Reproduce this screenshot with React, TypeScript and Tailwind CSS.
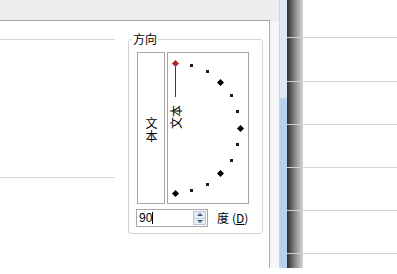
import React from "react";

const cjk = { fontFamily: '"Noto Sans CJK SC", "Noto Sans", sans-serif' };

function Dial() {
  const angles = [90, 75, 60, 45, 30, 15, 0, -15, -30, -45, -60, -75, -90];
  const cx = 7;
  const cy = 75;
  const r = 65;
  return (
    <div className="relative w-[82px] h-[152px] border border-[#a6a6a6] bg-white">
      {angles.map((a) => {
        const rad = (a * Math.PI) / 180;
        const x = cx + r * Math.cos(rad);
        const y = cy - r * Math.sin(rad);
        const big = a % 45 === 0;
        const red = a === 90;
        const s = big ? 5 : 3;
        return (
          <div
            key={a}
            className={
              big
                ? red
                  ? "absolute rotate-45 bg-[#b3232a]"
                  : "absolute rotate-45 bg-black"
                : "absolute bg-[#1a1a1a]"
            }
            style={{ left: x - s / 2, top: y - s / 2, width: s, height: s }}
          />
        );
      })}
      <div className="absolute left-[7px] top-[14px] w-[1px] h-[30px] bg-[#3a3a3a]" />
      <div
        className="absolute left-[-4px] top-[57px] w-[24px] h-[14px] -rotate-90 text-[12px] leading-[14px] text-black whitespace-nowrap"
        style={cjk}
      >
        文本
      </div>
    </div>
  );
}

export default function App() {
  return (
    <div className="w-[397px] h-[274px] bg-white overflow-hidden">
      <div className="flex h-[268px]">
        {/* main pane */}
        <div className="w-[270px] flex flex-col">
          <div className="h-[21px] bg-[#eeeeee] border-b border-[#a4a4a4] shrink-0" />
          <div className="flex-1 flex border-r border-[#b0b0b0]">
            <div className="w-[115px] flex flex-col">
              <div className="h-[18px]" />
              <div className="h-[138px] border-t border-[#d6d6d6]" />
              <div className="h-[90px] border-t border-[#d6d6d6]" />
            </div>
            <div className="ml-[13px] mt-[18px] w-[135px] h-[195px] border border-[#d4d4d4] rounded-[3px] relative">
              <div
                className="absolute left-[3px] top-[-8px] bg-white px-[1px] text-[12px] leading-[14px] text-black"
                style={cjk}
              >
                方向
              </div>
              <div className="pl-[8px] pt-[12px] flex gap-[2px]">
                <div className="w-[28px] h-[152px] border border-[#a6a6a6] flex items-center justify-center pt-[4px]">
                  <span
                    className="text-[12px] leading-[14px] text-black tracking-[1px] [writing-mode:vertical-rl] [text-orientation:upright]"
                    style={cjk}
                  >
                    文本
                  </span>
                </div>
                <Dial />
              </div>
              <div className="pl-[7px] mt-[5px] flex items-center">
                <div className="w-[72px] h-[18px] border border-[#a6a6a6] flex items-center bg-white">
                  <span
                    className="pl-[2px] text-[12px] leading-[14px] text-black"
                    style={{ fontFamily: '"Liberation Sans", sans-serif' }}
                  >
                    90
                  </span>
                  <span className="w-[1px] h-[12px] bg-black" />
                  <div className="ml-auto mr-[1px] w-[13px] h-[14px] flex flex-col border border-[#b8c6da] bg-[#e4ecf6]">
                    <div className="flex-1 flex items-center justify-center border-b border-[#c4d0e0]">
                      <div className="w-0 h-0 border-l-[3px] border-r-[3px] border-b-[3px] border-l-transparent border-r-transparent border-b-[#4a5870]" />
                    </div>
                    <div className="flex-1 flex items-center justify-center">
                      <div className="w-0 h-0 border-l-[3px] border-r-[3px] border-t-[3px] border-l-transparent border-r-transparent border-t-[#4a5870]" />
                    </div>
                  </div>
                </div>
                <div className="ml-[9px] text-[12px] leading-[14px] text-black flex items-center" style={cjk}>
                  <span>度</span>
                  <span className="ml-[3px]">(</span>
                  <span className="underline">D</span>
                  <span>)</span>
                </div>
              </div>
            </div>
          </div>
        </div>
        {/* gap */}
        <div className="w-[9px] flex flex-col">
          <div className="h-[21px] bg-[#eeeeee]" />
          <div className="flex-1 bg-[#f6f6f6]" />
        </div>
        {/* blue stripe */}
        <div className="w-[8px] flex flex-col border-l border-[#c6d6ea]">
          <div className="h-[98px] bg-[#dde8f4]" />
          <div className="flex-1 bg-[#b7d1f0]" />
        </div>
        {/* right pane */}
        <div className="flex-1 relative">
          <div className="absolute left-0 top-0 w-[16px] h-full bg-gradient-to-r from-[#2e2e2e] via-[#8a8a8a] to-[#d8d8d8]" />
          <div className="relative flex flex-col">
            <div className="h-[37px]" />
            <div className="h-[44px] border-t border-[#d2d2d2]" />
            <div className="h-[43px] border-t border-[#d2d2d2]" />
            <div className="h-[43px] border-t border-[#d2d2d2]" />
            <div className="h-[43px] border-t border-[#d2d2d2]" />
            <div className="h-[43px] border-t border-[#d2d2d2]" />
            <div className="h-[15px] border-t border-[#d2d2d2]" />
          </div>
        </div>
      </div>
    </div>
  );
}
